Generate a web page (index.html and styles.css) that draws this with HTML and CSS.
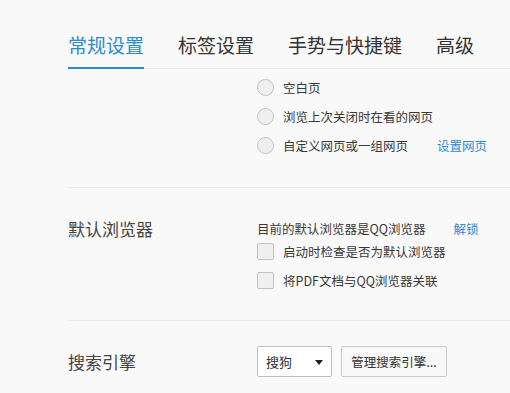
FILE: index.html
```html
<!DOCTYPE html>
<html lang="zh-CN">
<head>
    <meta charset="UTF-8">
    <title>设置</title>
    <link rel="stylesheet" href="styles.css">
</head>
<body>
    <div class="page">
        <ul class="tabs">
            <li class="tab active">常规设置</li>
            <li class="tab">标签设置</li>
            <li class="tab">手势与快捷键</li>
            <li class="tab">高级</li>
        </ul>

        <div class="section startup">
            <div class="label"></div>
            <div class="options">
                <label class="row"><span class="radio"></span>空白页</label>
                <label class="row"><span class="radio"></span>浏览上次关闭时在看的网页</label>
                <label class="row"><span class="radio"></span>自定义网页或一组网页<a class="link pages">设置网页</a></label>
            </div>
        </div>

        <div class="section browser">
            <div class="label">默认浏览器</div>
            <div class="options">
                <div class="row first">目前的默认浏览器是QQ浏览器<a class="link unlock">解锁</a></div>
                <label class="row"><span class="check"></span>启动时检查是否为默认浏览器</label>
                <label class="row"><span class="check"></span>将PDF文档与QQ浏览器关联</label>
            </div>
        </div>

        <div class="section search">
            <div class="label">搜索引擎</div>
            <div class="options controls">
                <div class="select">搜狗<span class="arrow"></span></div>
                <button class="btn">管理搜索引擎...</button>
            </div>
        </div>
    </div>
</body>
</html>
```

FILE: styles.css
```css
*{
    box-sizing: border-box;
}
html, body{
    margin: 0;
    height: 100%;
}
body{
    background-color: #f9f9f9;
    font-family: "Noto Sans CJK SC", "Noto Sans", sans-serif;
    color: #333;
    overflow: hidden;
}

.page{
    padding-left: 68px;
}

.tabs{
    display: flex;
    gap: 34px;
    list-style: none;
    margin: 0;
    padding: 31px 0 0 0;
    border-bottom: 1px solid #ececec;
}

.tab{
    font-size: 19px;
    line-height: 28px;
    padding-bottom: 8px;
    color: #333;
    cursor: pointer;
}

.tab.active{
    color: #2b8ad0;
    border-bottom: 2px solid #2b8ad0;
    margin-bottom: -1px;
}

.section{
    display: grid;
    grid-template-columns: 189px 1fr;
    border-bottom: 1px solid #ececec;
}

.label{
    font-size: 17px;
    color: #444;
}

.row{
    display: flex;
    align-items: center;
    height: 29px;
    font-size: 12.5px;
    color: #383838;
}

.radio, .check{
    width: 17px;
    height: 17px;
    margin-right: 9px;
    background-color: #efefef;
    border: 1px solid #c2c2c2;
}
.radio{
    border-radius: 50%;
}
.check{
    border-radius: 2px;
}

.link{
    color: #2b8ad0;
    cursor: pointer;
}
.pages{
    margin-left: 29px;
}
.unlock{
    margin-left: 28px;
}

.startup{
    padding: 4px 0 27px;
}

.browser{
    padding: 29px 0 25px;
}
.browser .label{
    line-height: 22px;
    padding-top: 1px;
}
.browser .row.first{
    height: 22px;
    margin-bottom: -2px;
}

.search{
    padding-top: 25px;
    border-bottom: none;
}
.search .label{
    line-height: 31px;
}
.controls{
    display: flex;
    gap: 9px;
}

.select{
    position: relative;
    width: 75px;
    height: 31px;
    padding-left: 8px;
    line-height: 29px;
    font-size: 13px;
    color: #333;
    background-color: #fff;
    border: 1px solid #bdbdbd;
    border-radius: 2px;
}
.arrow{
    position: absolute;
    right: 8px;
    top: 13px;
    border-left: 4px solid transparent;
    border-right: 4px solid transparent;
    border-top: 5px solid #222;
}

.btn{
    width: 106px;
    height: 31px;
    font-family: inherit;
    font-size: 12.5px;
    color: #333;
    background-color: #f8f8f8;
    border: 1px solid #c9c9c9;
    border-radius: 2px;
    padding: 0;
}
```
